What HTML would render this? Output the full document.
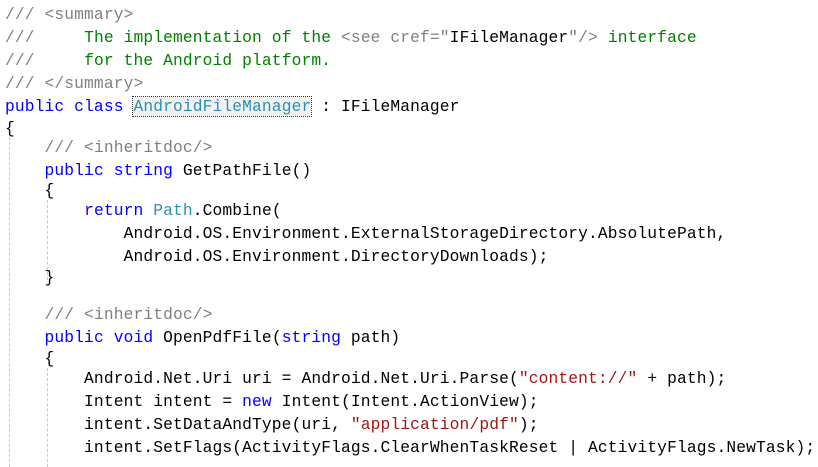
<!DOCTYPE html>
<html><head><style>
body{margin:0;width:818px;height:467px;background:#fff;overflow:hidden;position:relative;font-family:"Liberation Mono",monospace;font-size:16.25px;letter-spacing:0.13px;color:#000}
.l{position:absolute;left:5px;height:22px;line-height:22px;white-space:pre}
.g{color:#808080}.c{color:#008000}.k{color:#0000ff}.t{color:#2b91af}.s{color:#a31515}
.hl{background:#f2f2f2;outline:1px dotted #333;outline-offset:0}
.guide{position:absolute;width:0;border-left:1px dashed #c8c8c8}
</style></head><body>
<div class="guide" style="left:9px;top:137px;height:330px"></div>
<div class="guide" style="left:47px;top:200px;height:80px"></div>
<div class="guide" style="left:47px;top:368px;height:99px"></div>
<div class="l" style="top:4px"><span class="g">/// &lt;summary&gt;</span></div>
<div class="l" style="top:27px"><span class="g">///     </span><span class="c">The implementation of the </span><span class="g">&lt;see cref="</span>IFileManager<span class="g">"/&gt;</span><span class="c"> interface</span></div>
<div class="l" style="top:50px"><span class="g">///     </span><span class="c">for the Android platform.</span></div>
<div class="l" style="top:73px"><span class="g">/// &lt;/summary&gt;</span></div>
<div class="l" style="top:96px"><span class="k">public class </span><span class="t hl">AndroidFileManager</span> : IFileManager</div>
<div class="l" style="top:118px">{</div>
<div class="l" style="top:137px">    <span class="g">/// &lt;inheritdoc/&gt;</span></div>
<div class="l" style="top:160px">    <span class="k">public string</span> GetPathFile()</div>
<div class="l" style="top:180px">    {</div>
<div class="l" style="top:200px">        <span class="k">return</span> <span class="t">Path</span>.Combine(</div>
<div class="l" style="top:223px">            Android.OS.Environment.ExternalStorageDirectory.AbsolutePath,</div>
<div class="l" style="top:246px">            Android.OS.Environment.DirectoryDownloads);</div>
<div class="l" style="top:267px">    }</div>
<div class="l" style="top:304px">    <span class="g">/// &lt;inheritdoc/&gt;</span></div>
<div class="l" style="top:327px">    <span class="k">public void</span> OpenPdfFile(<span class="k">string</span> path)</div>
<div class="l" style="top:348px">    {</div>
<div class="l" style="top:368px">        Android.Net.Uri uri = Android.Net.Uri.Parse(<span class="s">"content://"</span> + path);</div>
<div class="l" style="top:391px">        Intent intent = <span class="k">new</span> Intent(Intent.ActionView);</div>
<div class="l" style="top:414px">        intent.SetDataAndType(uri, <span class="s">"application/pdf"</span>);</div>
<div class="l" style="top:437px">        intent.SetFlags(ActivityFlags.ClearWhenTaskReset | ActivityFlags.NewTask);</div>
</body></html>
